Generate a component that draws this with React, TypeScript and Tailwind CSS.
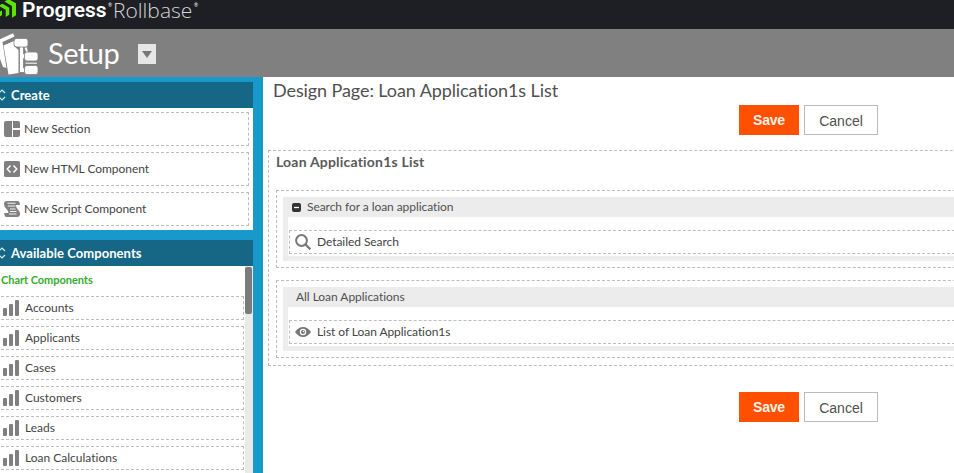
import React from "react";

const charts = ["Accounts", "Applicants", "Cases", "Customers", "Leads", "Loan Calculations"];

function Logo() {
  return (
    <svg width="17" height="20" viewBox="0 0 17 20" className="shrink-0" fill="#5ce500">
      <path d="M4.500 1.600L7 0H10L16 3.300V15.300L12 17.700V6Z" />
      <path d="M0 5L2.500 3.700L9.300 7.700V14.700L5.700 17V9.700L0 6.500Z" />
      <path d="M0 11.500L2 10.500V15L0 16.500Z" />
    </svg>
  );
}

function SetupIcon() {
  return (
    <svg width="39" height="46" viewBox="0 0 39 46" className="shrink-0" fill="#fff">
      <path d="M0 9.300L13 3.300L14.500 6.500L2.500 12L6.500 38L3 37L0 29Z" />
      <path d="M3.500 15.500L14 11V16L18.500 20V43L8.500 44.500Z" />
      <g stroke="#808080" strokeWidth=".8">
        <path d="M19.500 16.500H23.500V24H26V28.500H23.500V38H26V42.500H19.500Z" />
        <path d="M24 17.500L27 16.500L28.500 22.500H26Z" />
        <rect x="14" y="8.500" width="14" height="8.500" rx="2.500" />
        <rect x="24.500" y="22" width="13.500" height="9" rx="2.500" />
        <rect x="24.500" y="35.500" width="13.500" height="9" rx="2.500" />
      </g>
      <path d="M25.500 32.500H37V34H25.500Z" fill="#d8d8d8" />
    </svg>
  );
}

function Updown() {
  return (
    <svg width="6" height="12" viewBox="0 0 6 12" fill="none" stroke="#d5eef5" strokeWidth="1.200" className="shrink-0">
      <path d="M-1 4L2 1L5 4M-1 8L2 11L5 8" />
    </svg>
  );
}

function SectionIcon() {
  return (
    <svg width="16" height="16" viewBox="0 0 16 16" fill="#808080">
      <path d="M2 0H8V16H2Q0 16 0 14V2Q0 0 2 0ZM9 0H14Q16 0 16 2V7H9ZM9 9H16V14Q16 16 14 16H9Z" />
    </svg>
  );
}

function HtmlIcon() {
  return (
    <svg width="16" height="16" viewBox="0 0 16 16">
      <rect width="16" height="16" rx="1.500" fill="#808080" />
      <path d="M6.500 4.500L3.200 8L6.500 11.500M9.500 4.500L12.800 8L9.500 11.500" stroke="#fff" strokeWidth="1.400" fill="none" />
    </svg>
  );
}

function ScriptIcon() {
  return (
    <svg width="16" height="16" viewBox="0 0 16 16">
      <path d="M3 0H14Q16 .5 15.800 4H12Q11.800 6 13.500 8Q16 10.500 16 13Q16 16 13 16H2.500Q.2 15.700 .2 12H4.500Q4.500 9.800 2.500 8Q0 5.500 0 3Q0 .2 3 0Z" fill="#808080" />
      <path d="M3.500 2.200H11.500M3.800 5H11.500M6 8H11.500M6 10.500H12.500M5 13H12.500" stroke="#fff" strokeWidth=".9" />
    </svg>
  );
}

function BarsIcon() {
  return (
    <svg width="16" height="16" viewBox="0 0 16 16" fill="#808080" className="shrink-0">
      <rect x="0" y="8" width="4" height="8" rx="1" />
      <rect x="6" y="4" width="4" height="12" rx="1" />
      <rect x="12" y="0" width="4" height="16" rx="1" />
    </svg>
  );
}

function SearchIcon() {
  return (
    <svg width="16" height="16" viewBox="0 0 16 16" fill="none" stroke="#777" strokeWidth="2">
      <circle cx="6.500" cy="6.500" r="5.400" />
      <path d="M10.500 10.500L15.300 15.300" strokeWidth="2.300" />
    </svg>
  );
}

function EyeIcon() {
  return (
    <svg width="16" height="16" viewBox="0 0 16 16">
      <path d="M0 8Q3.500 3 8 3T16 8Q12.500 13 8 13T0 8Z" fill="#777" />
      <circle cx="8" cy="8" r="2.600" stroke="#fff" strokeWidth="1.200" fill="#777" />
      <circle cx="8.500" cy="7.500" r=".7" fill="#fff" />
    </svg>
  );
}

function PanelHeader({ children }: { children: React.ReactNode }) {
  return (
    <div className="flex h-[26px] w-[253px] items-center bg-[#166686] text-[13px] font-bold tracking-[0.06px] text-white">
      <Updown />
      <span className="ml-[5px]">{children}</span>
    </div>
  );
}

function CreateRow({ icon, children }: { icon: React.ReactNode; children: React.ReactNode }) {
  return (
    <div className="-ml-1 flex h-[34px] w-[253px] items-center border border-dashed border-[#bdbdbd] pl-[7px]">
      {icon}
      <span className="ml-[4px] tracking-[-0.04px]">{children}</span>
    </div>
  );
}

function Buttons() {
  return (
    <div className="ml-[476px] flex h-[30px] gap-[5px] font-['Liberation_Sans',Arial,sans-serif] text-[14px]">
      <button className="h-[30px] w-[60px] bg-[#ff5000] font-bold tracking-[-0.2px] text-[#fff1e8]">Save</button>
      <button className="h-[30px] w-[74px] border border-[#bbb] pt-[2px] text-[#505050]">Cancel</button>
    </div>
  );
}

function Section({ title, collapsible, icon, item }: { title: string; collapsible?: boolean; icon: React.ReactNode; item: string }) {
  return (
    <div className="ml-[7px] h-[78px] w-[700px] border border-dashed border-[#bdbdbd] pl-[6px] pt-[6px]">
      <div className="h-[64px] border-[5px] border-t-0 border-[#ececec]">
        <div className="flex h-5 items-center bg-[#ececec] pl-1 text-[#505050]">
          {collapsible && (
            <svg width="9" height="9" viewBox="0 0 9 9" className="mr-[6px]">
              <rect width="9" height="9" rx="2" fill="#333" />
              <path d="M2 4.500H7" stroke="#fff" strokeWidth="1.300" />
            </svg>
          )}
          <span className={collapsible ? "tracking-[-0.06px]" : "ml-1 tracking-[-0.04px]"}>{title}</span>
        </div>
        <div className="ml-px mt-[13px] flex h-6 items-center border border-dashed border-[#bdbdbd] pl-[5px]">
          {icon}
          <span className="ml-[6px] tracking-[-0.06px]">{item}</span>
        </div>
      </div>
    </div>
  );
}

export default function App() {
  return (
    <div className="flex h-[473px] w-[954px] flex-col overflow-hidden bg-white font-[Lato,sans-serif] text-[12px] leading-4 text-[#444] [font-variant-ligatures:none]">
      <header className="flex h-[29px] shrink-0 items-start bg-[#1e1f24] text-white">
        <Logo />
        <span className="ml-[5px] w-[86px] whitespace-nowrap font-[Roboto,sans-serif] text-[21px] font-semibold leading-[20px] tracking-[-0.04px]">Progress</span>
        <span className="mt-[2px] w-[5px] text-[5px] leading-[6px]">®</span>
        <span className="w-[81px] whitespace-nowrap font-['Open_Sans',sans-serif] text-[21px] font-light leading-[20px] tracking-[0.02px] text-[#d5d5d5]">Rollbase</span>
        <span className="mt-[2px] text-[5px] leading-[6px]">®</span>
      </header>
      <div className="flex h-12 shrink-0 items-center bg-[#808080] text-white">
        <SetupIcon />
        <span className="ml-[9px] w-[90px] text-[29px] leading-[40px] tracking-[-0.5px]">Setup</span>
        <div className="mt-[2px] flex h-5 w-[18px] items-center justify-center bg-[#e6e6e6]">
          <svg width="10" height="7" viewBox="0 0 10 7" fill="#777"><path d="M0 0H10L5 7Z" /></svg>
        </div>
      </div>
      <div className="flex min-h-0 flex-1">
        <aside className="w-[263px] shrink-0 overflow-hidden bg-[#1899cb] pt-[5px]">
          <PanelHeader>Create</PanelHeader>
          <div className="mb-[10px] flex h-[122px] w-[253px] flex-col gap-[6px] overflow-hidden bg-white pt-1">
            <CreateRow icon={<SectionIcon />}>New Section</CreateRow>
            <CreateRow icon={<HtmlIcon />}>New HTML Component</CreateRow>
            <CreateRow icon={<ScriptIcon />}>New Script Component</CreateRow>
          </div>
          <PanelHeader>Available Components</PanelHeader>
          <div className="flex h-[207px] w-[253px] bg-white">
            <div className="w-[245px] overflow-hidden pt-[6px]">
              <div className="ml-[1px] h-6 text-[11px] font-bold tracking-[-0.04px] text-[#36ac2d]">Chart Components</div>
              <div className="flex flex-col gap-[6px]">
                {charts.map((name) => (
                  <div key={name} className="-ml-1 flex h-6 w-[248px] shrink-0 items-center border border-dashed border-[#bdbdbd] pl-[6px]">
                    <BarsIcon />
                    <span className="ml-[6px]">{name}</span>
                  </div>
                ))}
              </div>
            </div>
            <div className="w-2 bg-[#eaeaea] pt-px">
              <div className="h-[47px] w-[7px] rounded-[2px] bg-[#7b7b7e]" />
            </div>
          </div>
        </aside>
        <main className="min-w-0 flex-1 overflow-hidden">
          <h1 className="ml-[10px] h-[28px] pt-[1px] text-[18px] leading-6 tracking-[-0.09px] text-[#505050]">Design Page: Loan Application1s List</h1>
          <Buttons />
          <div className="mb-[26px] ml-[5px] mt-[15px] h-[216px] w-[720px] border border-dashed border-[#bdbdbd]">
            <h2 className="h-[39px] pl-[7px] pt-[3px] text-[14px] font-bold leading-4 tracking-[0.2px] text-[#5a5a5a]">Loan Application1s List</h2>
            <div className="flex flex-col gap-3">
              <Section collapsible title="Search for a loan application" icon={<SearchIcon />} item="Detailed Search" />
              <Section title="All Loan Applications" icon={<EyeIcon />} item="List of Loan Application1s" />
            </div>
          </div>
          <Buttons />
        </main>
      </div>
    </div>
  );
}
